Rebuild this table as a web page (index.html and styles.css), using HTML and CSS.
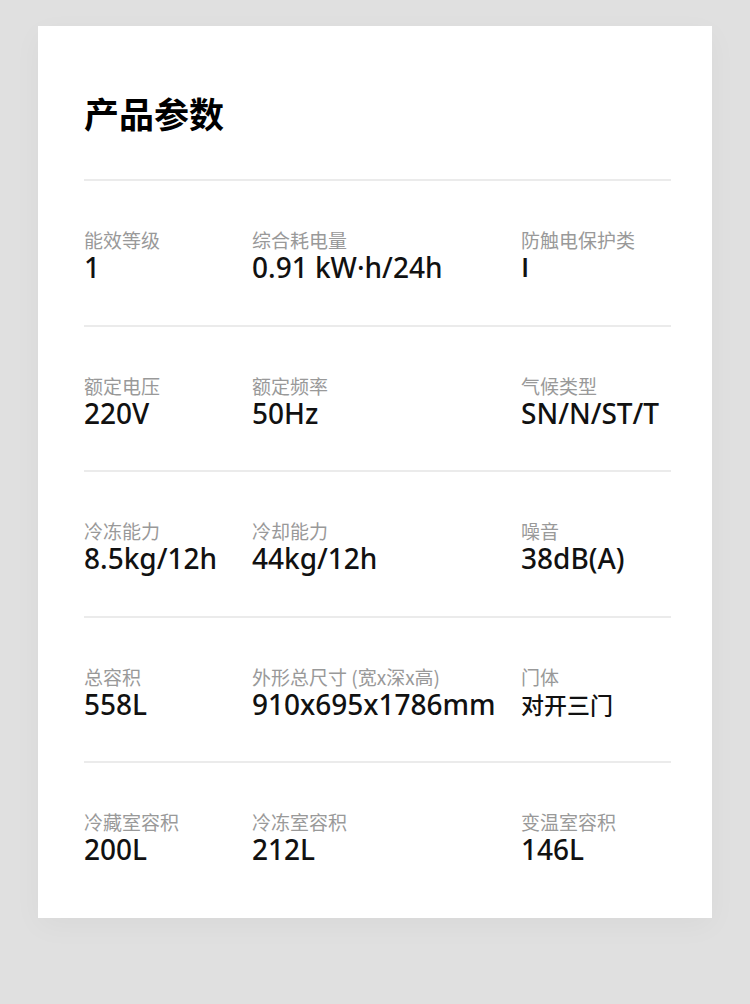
FILE: index.html
```html
<!DOCTYPE html>
<html lang="zh">
<head>
<meta charset="utf-8">
<title>产品参数</title>
<link rel="stylesheet" href="styles.css">
</head>
<body>
<div class="page">
  <section class="card">
    <h1 class="title">产品参数</h1>
    <div class="row">
      <div class="cell"><div class="label">能效等级</div><div class="value">1</div></div>
      <div class="cell"><div class="label">综合耗电量</div><div class="value">0.91 kW·h/24h</div></div>
      <div class="cell"><div class="label">防触电保护类</div><div class="value value-plain">I</div></div>
    </div>
    <div class="row">
      <div class="cell"><div class="label">额定电压</div><div class="value">220V</div></div>
      <div class="cell"><div class="label">额定频率</div><div class="value">50Hz</div></div>
      <div class="cell"><div class="label">气候类型</div><div class="value">SN/N/ST/T</div></div>
    </div>
    <div class="row">
      <div class="cell"><div class="label">冷冻能力</div><div class="value">8.5kg/12h</div></div>
      <div class="cell"><div class="label">冷却能力</div><div class="value">44kg/12h</div></div>
      <div class="cell"><div class="label">噪音</div><div class="value">38dB(A)</div></div>
    </div>
    <div class="row">
      <div class="cell"><div class="label">总容积</div><div class="value">558L</div></div>
      <div class="cell"><div class="label">外形总尺寸 (宽x深x高)</div><div class="value">910x695x1786mm</div></div>
      <div class="cell"><div class="label">门体</div><div class="value value-cjk">对开三门</div></div>
    </div>
    <div class="row">
      <div class="cell"><div class="label">冷藏室容积</div><div class="value">200L</div></div>
      <div class="cell"><div class="label">冷冻室容积</div><div class="value">212L</div></div>
      <div class="cell"><div class="label">变温室容积</div><div class="value">146L</div></div>
    </div>
  </section>
</div>
</body>
</html>
```
FILE: styles.css
```css
html, body {
  margin: 0;
  padding: 0;
  background: #e0e0e0;
}
body {
  font-family: "Noto Sans", "Noto Sans CJK SC", sans-serif;
  color: #111;
}
.page {
  padding: 26px 38px 87px;
}
.card {
  background: #fff;
  width: 674px;
  box-sizing: border-box;
  padding: 67px 41px 54px 46px;
  box-shadow: 0 8px 28px rgba(0, 0, 0, 0.035);
}
.title {
  margin: 0 0 46px;
  font-family: "Noto Sans CJK SC", sans-serif;
  font-size: 35px;
  line-height: 40px;
  font-weight: 700;
  color: #000;
}
.row {
  display: grid;
  grid-template-columns: 168px 269px 1fr;
  border-top: 2px solid #ebebeb;
  padding: 47px 0 0;
  height: 96.5px;
}
.row:last-child {
  height: auto;
}
.cell {
  display: flex;
  flex-direction: column;
}
.label {
  font-family: "Noto Sans CJK SC", sans-serif;
  font-size: 19px;
  line-height: 24px;
  height: 24px;
  color: #999;
  white-space: nowrap;
}
.value {
  font-size: 28px;
  line-height: 30px;
  height: 30px;
  font-weight: 500;
  color: #111;
  white-space: nowrap;
  font-family: "Noto Sans", "Noto Sans CJK SC", sans-serif;
}
.value-plain {
  font-family: "Open Sans", sans-serif;
  font-weight: 600;
  font-size: 27px;
}
.value-cjk {
  font-family: "Noto Sans CJK SC", sans-serif;
  font-size: 23px;
  font-weight: 500;
}
```
